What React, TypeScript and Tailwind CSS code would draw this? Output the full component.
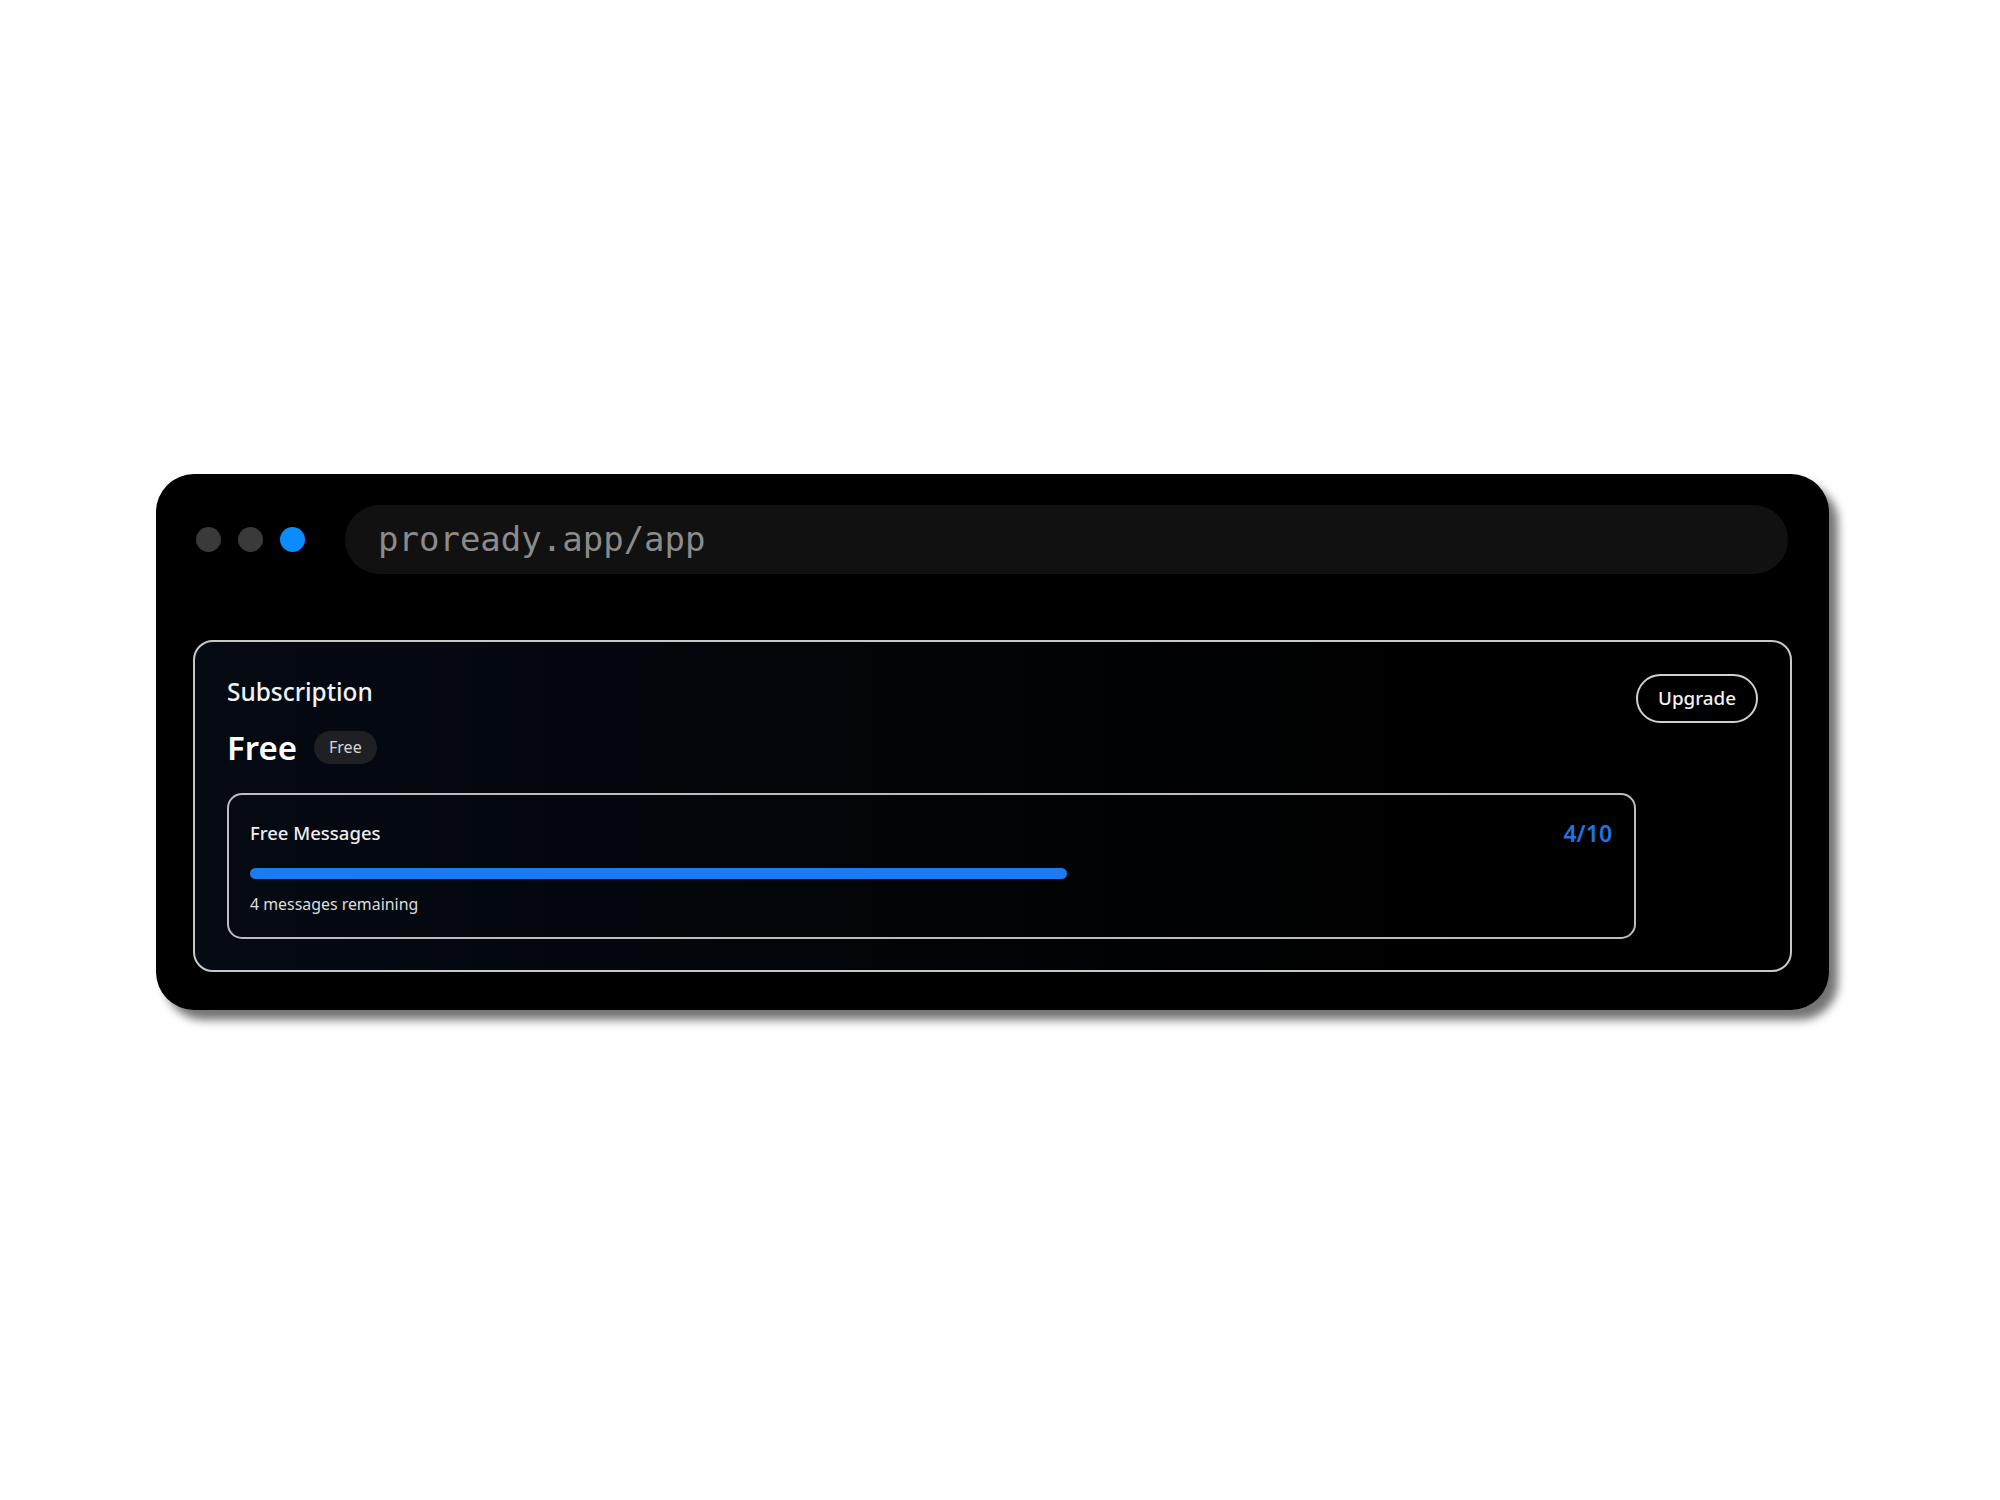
function TrafficDots() {
  return (
    <div className="flex shrink-0 items-center gap-[17px]">
      <span className="h-[25px] w-[25px] rounded-full bg-[#3a3a3a]" />
      <span className="h-[25px] w-[25px] rounded-full bg-[#3a3a3a]" />
      <span className="h-[25px] w-[25px] rounded-full bg-[#0a8cff]" />
    </div>
  )
}

function UsageBox({ used, total }: { used: number; total: number }) {
  const remaining = total - used
  const pct = (used / total) * 100
  return (
    <div className="rounded-[15px] border-2 border-[#bdbdbd] pl-[21px] pr-[22px] pt-[24px] pb-[21px]">
      <div className="flex items-center justify-between">
        <span className="text-[18.5px] leading-[28px] font-medium text-[#eeeeee]">Free Messages</span>
        <span className="text-[23px] leading-[28px] font-semibold text-[#1f74e0]">
          {remaining}/{total}
        </span>
      </div>
      <div className="mt-[21px] h-[11px] w-full rounded-full">
        <div className="h-full rounded-full bg-[#1d7bf0]" style={{ width: `${pct}%` }} />
      </div>
      <p className="mt-[14px] text-[15.9px] leading-[23px] text-[#dddddd]">{remaining} messages remaining</p>
    </div>
  )
}

export default function App() {
  return (
    <div
      className="flex h-[1500px] w-full items-center justify-center bg-white pr-[15px] pb-[17px]"
      style={{ fontFamily: '"Noto Sans", "Open Sans", sans-serif' }}
    >
      <div className="w-[1673px] rounded-[38px] bg-black pt-[31px] pb-[38px] px-[37px] shadow-[9px_10px_10px_rgba(0,0,0,0.55)]">
        <div className="flex items-center gap-[40px] pl-[3px] pr-[4px]">
          <TrafficDots />
          <div className="flex h-[69px] flex-1 items-center rounded-full bg-[#111111] px-[33px]">
            <span className="text-[34px] text-[#8b8b8b]" style={{ fontFamily: '"DejaVu Sans Mono", monospace' }}>
              proready.app/app
            </span>
          </div>
        </div>

        <div className="mt-[66px] flex rounded-[20px] border-2 border-[#c8c8c8] bg-gradient-to-r from-[#050a13] via-[#020407] to-black pl-[32px] pr-[32px] pt-[32px] pb-[31px]">
          <div className="flex-1">
            <h2 className="text-[24.4px] leading-[36px] font-medium text-[#f2f2f2]">Subscription</h2>
            <div className="mt-[16px] flex items-center gap-[17px]">
              <span className="text-[33px] leading-[44px] font-semibold text-white">Free</span>
              <span className="rounded-full bg-[#1e2024] px-[15px] py-[4px] text-[16px] leading-[25px] text-[#d6d6d6]">
                Free
              </span>
            </div>
            <div className="mt-[23px]">
              <UsageBox used={6} total={10} />
            </div>
          </div>
          <div className="shrink-0">
            <button className="h-[49px] rounded-full border-2 border-[#d0d0d0] px-[20px] text-[18.8px] font-medium text-[#f2f2f2]">
              Upgrade
            </button>
          </div>
        </div>
      </div>
    </div>
  )
}
